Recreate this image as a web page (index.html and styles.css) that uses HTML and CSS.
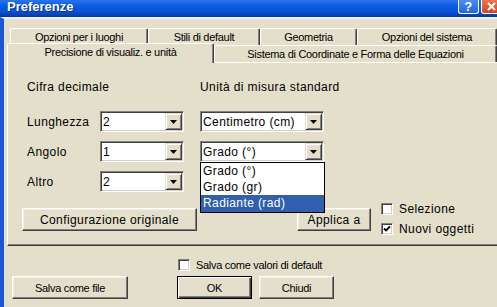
FILE: index.html
```html
<!DOCTYPE html>
<html lang="it">
<head>
  <meta charset="UTF-8">
  <meta name="viewport" content="width=device-width, initial-scale=1.0">
  <link rel="stylesheet" href="styles.css">
</head>
<body>
  <div class="window">
    <div class="titlebar">
      <span class="title">Preferenze</span>
      <div class="title-buttons">
        <span class="tb-btn tb-help">?</span>
        <span class="tb-btn tb-close">
          <svg width="9" height="9" viewBox="0 0 9 9"><path d="M1 1L8 8M8 1L1 8" stroke="#fff" stroke-width="2"/></svg>
        </span>
      </div>
    </div>

    <div class="client">
      <div class="tab-row tab-row-back">
        <div class="tab tab-luoghi">Opzioni per i luoghi</div>
        <div class="tab tab-stili">Stili di default</div>
        <div class="tab tab-geometria">Geometria</div>
        <div class="tab tab-sistema">Opzioni del sistema</div>
      </div>
      <div class="tab-row tab-row-front">
        <div class="tab tab-active tab-precisione">Precisione di visualiz. e unità</div>
        <div class="tab tab-coordinate">Sistema di Coordinate e Forma delle Equazioni</div>
      </div>

      <div class="panel">
        <div class="units">
          <div class="units-head units-head-wide">Cifra decimale</div>
          <div class="units-head">Unità di misura standard</div>

          <div class="units-label">Lunghezza</div>
          <div class="combo combo-small">
            <span class="combo-value">2</span>
            <span class="combo-arrow"><svg width="7" height="4" viewBox="0 0 7 4"><path d="M0 0H7L3.5 4Z" fill="#000"/></svg></span>
          </div>
          <div class="combo combo-wide">
            <span class="combo-value">Centimetro (cm)</span>
            <span class="combo-arrow"><svg width="7" height="4" viewBox="0 0 7 4"><path d="M0 0H7L3.5 4Z" fill="#000"/></svg></span>
          </div>

          <div class="units-label">Angolo</div>
          <div class="combo combo-small">
            <span class="combo-value">1</span>
            <span class="combo-arrow"><svg width="7" height="4" viewBox="0 0 7 4"><path d="M0 0H7L3.5 4Z" fill="#000"/></svg></span>
          </div>
          <div class="combo combo-wide combo-open">
            <span class="combo-value">Grado (°)</span>
            <span class="combo-arrow"><svg width="7" height="4" viewBox="0 0 7 4"><path d="M0 0H7L3.5 4Z" fill="#000"/></svg></span>
            <ul class="combo-list">
              <li>Grado (°)</li>
              <li>Grado (gr)</li>
              <li class="selected">Radiante (rad)</li>
            </ul>
          </div>

          <div class="units-label">Altro</div>
          <div class="combo combo-small">
            <span class="combo-value">2</span>
            <span class="combo-arrow"><svg width="7" height="4" viewBox="0 0 7 4"><path d="M0 0H7L3.5 4Z" fill="#000"/></svg></span>
          </div>
        </div>

        <div class="panel-actions">
          <button class="btn btn-reset">Configurazione originale</button>
          <button class="btn btn-apply">Applica a</button>
          <div class="check-group">
            <label class="check-row"><span class="check"></span>Selezione</label>
            <label class="check-row"><span class="check checked"><svg width="8" height="8" viewBox="0 0 8 8"><path d="M1 3.5L3 5.5L7 1.5" stroke="#000" stroke-width="1.8" fill="none"/></svg></span>Nuovi oggetti</label>
          </div>
        </div>
      </div>

      <div class="footer">
        <label class="check-row footer-check"><span class="check"></span>Salva come valori di default</label>
        <div class="footer-buttons">
          <button class="btn btn-file">Salva come file</button>
          <button class="btn btn-default btn-ok">OK</button>
          <button class="btn btn-close">Chiudi</button>
        </div>
      </div>
    </div>
  </div>
</body>
</html>
```

FILE: styles.css
```css
body {
  margin: 0;
  font-family: 'Liberation Sans', Arial, sans-serif;
  font-size: 12px;
  letter-spacing: 0.4px;
  color: #000;
  background-color: #e3dfca;
}

.window {
  width: 497px;
  height: 307px;
  overflow: hidden;
  display: flex;
  flex-direction: column;
}

/* title bar */

.titlebar {
  flex: none;
  height: 17px;
  display: flex;
  align-items: flex-start;
  justify-content: space-between;
  background: linear-gradient(#2a74ee 0%, #0a5ce2 35%, #0754dc 65%, #0644c0 85%, #0538a6 100%);
}

.title {
  color: #fff;
  font-weight: bold;
  font-size: 13px;
  letter-spacing: 0;
  line-height: 13px;
  padding-left: 7px;
  text-shadow: 1px 1px #0b2f8f;
}

.title-buttons {
  display: flex;
  gap: 2px;
  margin-right: -5px;
}

.tb-btn {
  width: 19px;
  height: 13px;
  border: 1px solid #fff;
  border-top: none;
  border-radius: 0 0 3px 3px;
  display: flex;
  align-items: flex-end;
  justify-content: center;
  color: #fff;
  font-weight: bold;
  font-size: 13px;
  line-height: 13px;
}

.tb-help {
  background: linear-gradient(#4d8df5, #2662e0);
}

.tb-close {
  align-items: center;
  background: linear-gradient(#e8774f, #d4461c);
}

/* client area */

.client {
  flex: 1;
  border-left: 4px solid #1a57d6;
  border-top: 2px solid #f3f1e5;
  padding-top: 9px;
}

.tab-row {
  display: flex;
}

.tab-row-back {
  margin-left: 6px;
  height: 17px;
}

.tab-row-front {
  margin-left: 3px;
  margin-top: -2px;
  height: 19px;
  align-items: flex-start;
}

.tab {
  box-sizing: border-box;
  height: 17px;
  padding-top: 1px;
  border-top: 1px solid #fff;
  border-left: 1px solid #fff;
  border-right: 1px solid #404040;
  border-radius: 2px 2px 0 0;
  box-shadow: inset -1px 0 #808080;
  background-color: #e3dfca;
  text-align: center;
  font-size: 11px;
  letter-spacing: -0.3px;
  line-height: 15px;
  white-space: nowrap;
}

.tab-row-front .tab {
  margin-top: 2px;
}

.tab-row-front .tab-active {
  margin-top: 0;
  height: 20px;
  position: relative;
  z-index: 1;
}

.tab-luoghi { width: 138px; }
.tab-stili { width: 112px; }
.tab-geometria { width: 97px; }
.tab-sistema { width: 140px; }
.tab-precisione { width: 207px; }
.tab-coordinate { width: 283px; }

.panel {
  box-sizing: border-box;
  width: 493px;
  margin-left: 3px;
  border-top: 1px solid #fff;
  border-left: 1px solid #fff;
  border-bottom: 1px solid #404040;
  box-shadow: inset 0 -1px #808080;
  padding: 17px 0 8px 19px;
}

.units {
  display: grid;
  grid-template-columns: 73px 100px 124px;
  grid-template-rows: 22px repeat(3, 21px);
  row-gap: 9px;
  align-items: center;
}

.units-head {
  align-self: start;
  line-height: 15px;
  white-space: nowrap;
}

.units-head-wide {
  grid-column: 1 / 3;
}

.units-label {
  line-height: 15px;
  padding-top: 2px;
}

/* combo boxes */

.combo {
  box-sizing: border-box;
  height: 21px;
  display: flex;
  align-items: center;
  background-color: #fff;
  border: 1px solid;
  border-color: #808080 #fff #fff #808080;
  box-shadow: inset 1px 1px #404040, inset -1px -1px #d4d0c8;
}

.combo-small { width: 84px; }
.combo-wide { width: 124px; }

.combo-open {
  position: relative;
}

.combo-value {
  flex: 1;
  padding-left: 2px;
  line-height: 15px;
  padding-top: 1px;
  white-space: nowrap;
}

.combo-arrow {
  box-sizing: border-box;
  width: 17px;
  height: 17px;
  margin-right: 1px;
  display: flex;
  align-items: center;
  justify-content: center;
  background-color: #e3dfca;
  border: 1px solid;
  border-color: #e3dfca #404040 #404040 #e3dfca;
  box-shadow: inset 1px 1px #fff, inset -1px -1px #808080;
}

.combo-list {
  position: absolute;
  left: -1px;
  top: 20px;
  width: 125px;
  box-sizing: border-box;
  margin: 0;
  padding: 0;
  list-style: none;
  background-color: #fff;
  border: 1px solid #000;
  z-index: 2;
}

.combo-list li {
  height: 16px;
  line-height: 16px;
  padding-left: 2px;
}

.combo-list li.selected {
  background-color: #2f60b0;
  color: #fff;
  height: 17px;
}

/* buttons */

.btn {
  box-sizing: border-box;
  height: 23px;
  padding: 0;
  font: inherit;
  letter-spacing: inherit;
  color: #000;
  background-color: #e3dfca;
  border: 1px solid;
  border-color: #fff #404040 #404040 #fff;
  box-shadow: inset -1px -1px #808080, inset 1px 1px #f0eee2;
}

.btn-default {
  border: 1px solid #000;
  box-shadow: inset 1px 1px #fff, inset -1px -1px #404040, inset -2px -2px #808080;
}

.panel-actions {
  display: flex;
  align-items: flex-start;
  margin-top: 9px;
}

.btn-reset {
  width: 175px;
  margin-top: 7px;
  margin-left: -5px;
}

.btn-apply {
  width: 74px;
  margin-top: 7px;
  margin-left: 100px;
}

.check-group {
  display: flex;
  flex-direction: column;
  gap: 4px;
  margin-left: 10px;
}

.check-row {
  display: flex;
  align-items: center;
  gap: 6px;
  height: 16px;
  line-height: 15px;
  white-space: nowrap;
}

.check {
  box-sizing: border-box;
  width: 12px;
  height: 12px;
  flex: none;
  display: flex;
  align-items: center;
  justify-content: center;
  background-color: #fff;
  border: 1px solid;
  border-color: #808080 #fff #fff #808080;
  box-shadow: inset 1px 1px #404040, inset -1px -1px #d4d0c8;
}

/* footer */

.footer {
  padding: 12px 0 0 8px;
  font-size: 11px;
  letter-spacing: -0.3px;
}

.footer-check {
  height: 14px;
  margin-left: 166px;
}

.footer-buttons {
  display: flex;
  margin-top: 4px;
}

.btn-file {
  width: 116px;
  margin-right: 49px;
}

.btn-ok {
  width: 75px;
  margin-right: 7px;
}

.btn-close {
  width: 75px;
}
```
